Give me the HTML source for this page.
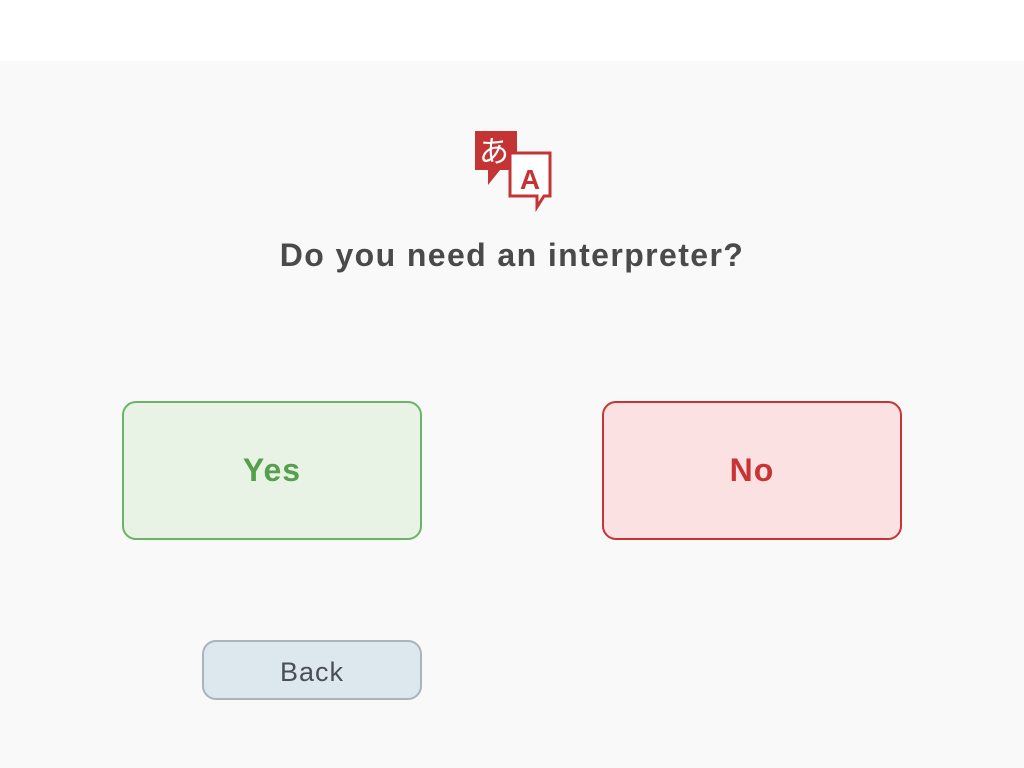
<!DOCTYPE html>
<html><head><style>
body{margin:0;width:1024px;height:768px;background:#fff;font-family:"Liberation Sans",sans-serif;overflow:hidden}
.main{position:absolute;top:61px;left:0;width:1024px;height:707px;background:#f9f9f9}
h1{position:absolute;top:237px;left:0;width:1024px;text-align:center;margin:0;font-size:32px;font-weight:bold;color:#4a4a4a;letter-spacing:1.4px}
.btn{position:absolute;box-sizing:border-box;border-radius:14px;border:2px solid;display:flex;align-items:center;justify-content:center;font-weight:bold;font-size:32px;letter-spacing:1px}
</style></head><body>
<div class="main"></div>
<svg style="position:absolute;left:470px;top:126px" width="90" height="90" viewBox="470 126 90 90">
<path d="M475 131H517V170H500L488 185V170H475Z" fill="#c43434"/>
<text x="494" y="162" font-size="30" fill="#fff" text-anchor="middle" font-family="Noto Sans CJK JP,sans-serif">あ</text>
<path d="M510 153H550V196H544L537 207V196H510Z" fill="#fff" stroke="#c43434" stroke-width="3"/>
<text x="530" y="189" font-size="28" font-weight="bold" fill="#c43434" text-anchor="middle">A</text>
</svg>
<h1>Do you need an interpreter?</h1>
<div class="btn" style="left:122px;top:401px;width:300px;height:139px;background:#e8f3e6;border-color:#6ab562;color:#55a04d">Yes</div>
<div class="btn" style="left:602px;top:401px;width:300px;height:139px;background:#fce1e2;border-color:#c83434;color:#c83434">No</div>
<div class="btn" style="left:202px;top:640px;width:220px;height:60px;background:#dde7ee;border-color:#a8b4be;color:#4a4f55;font-weight:normal;font-size:27px;padding-top:4px">Back</div>
</body></html>
